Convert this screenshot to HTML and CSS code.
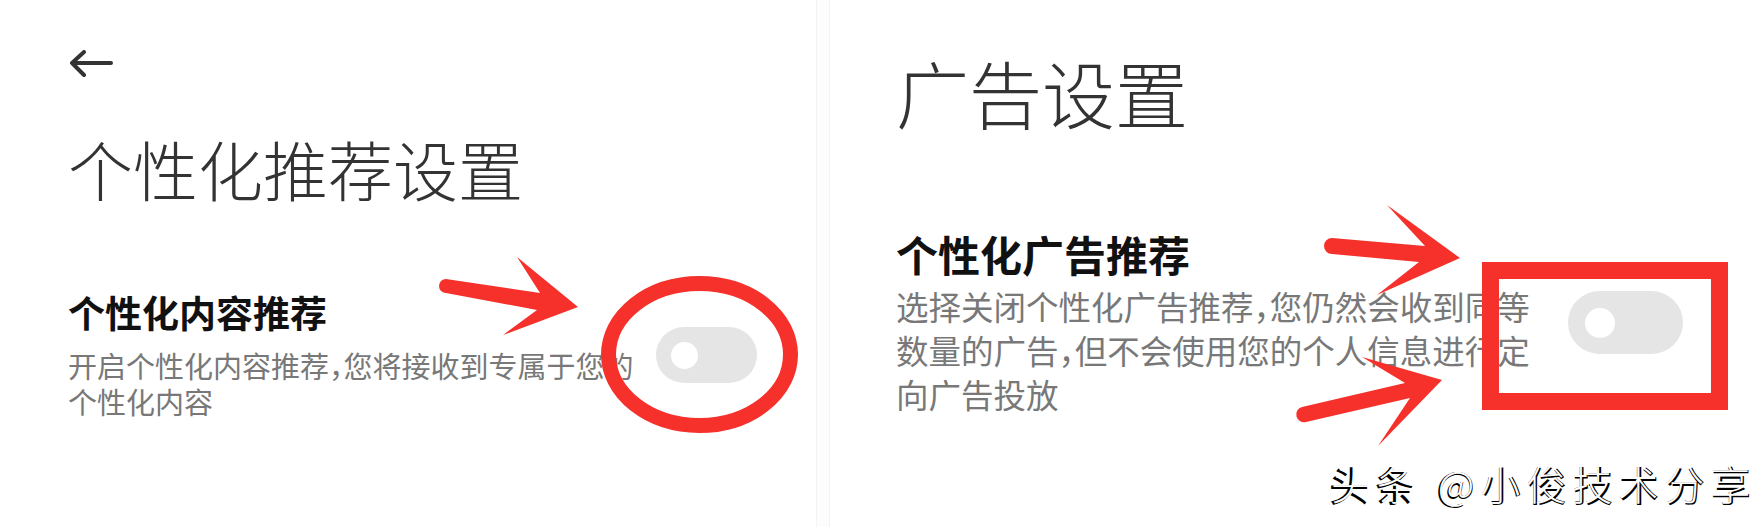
FILE: index.html
```
<!DOCTYPE html>
<html lang="zh-CN">
<head>
    <meta charset="UTF-8">
    <meta name="viewport" content="width=device-width, initial-scale=1.0">
    <title>个性化推荐设置 / 广告设置</title>
    <link rel="stylesheet" href="styles.css">
</head>
<body>

<div class="page">
    <section class="panel panel-left">
        <svg class="back" width="46" height="28" viewBox="0 0 46 28">
            <path d="M4 13 H43 M16 2 L4 13 L16 25" fill="none" stroke="#333" stroke-width="4" stroke-linecap="round" stroke-linejoin="round"/>
        </svg>
        <h1 class="title">个性化推荐设置</h1>
        <div class="row">
            <div class="text">
                <h2 class="item-title">个性化内容推荐</h2>
                <p class="item-desc">开启个性化内容推荐，您将接收到专属于您的<br>个性化内容</p>
            </div>
            <span class="switch"><span class="knob"></span></span>
        </div>
    </section>

    <section class="panel panel-right">
        <h1 class="title">广告设置</h1>
        <div class="row">
            <div class="text">
                <h2 class="item-title">个性化广告推荐</h2>
                <p class="item-desc">选择关闭个性化广告推荐，您仍然会收到同等<br>数量的广告，但不会使用您的个人信息进行定<br>向广告投放</p>
            </div>
            <span class="switch"><span class="knob"></span></span>
        </div>
        <div class="watermark" data-text="头条 @小俊技术分享">头条 @小俊技术分享</div>
    </section>

    <!-- red marks drawn over the screenshots -->
    <svg class="marks" width="1761" height="527" viewBox="0 0 1761 527">
        <path d="M446 279 L540 293 L517 257 L578 307 L503 335 L537 310 L446 293 A7 7 0 0 1 446 279 Z" fill="#f6302b"/>
        <ellipse cx="699.5" cy="354.5" rx="91" ry="71" fill="none" stroke="#f6302b" stroke-width="15"/>

        <path d="M1332 238 L1425 246 L1387 205 L1460 258 L1377 295 L1419 262 L1332 254 A8 8 0 0 1 1332 238 Z" fill="#f6302b"/>
        <path d="M1302 407 L1405 383 L1362 357 L1442 380 L1378 446 L1410 398 L1306 422 A7.7 7.7 0 0 1 1302 407 Z" fill="#f6302b"/>
        <rect x="1490.5" y="270.5" width="229" height="131" fill="none" stroke="#f6302b" stroke-width="17"/>
    </svg>
</div>

</body>
</html>
```

FILE: styles.css
```
body {
    margin: 0;
    background-color: #fdfdfd;
    font-family: "Noto Sans CJK SC", "Noto Sans", sans-serif;
}
.page {
    position: relative;
    display: flex;
    gap: 12px;
    width: 1761px;
    height: 527px;
    overflow: hidden;
}
.panel {
    position: relative;
    box-sizing: border-box;
    height: 527px;
    background-color: #fff;
}
.panel-left {
    width: 817px;
    padding: 50px 59px 0 68px;
    border-right: 1px solid #f3f3f3;
}
.panel-right {
    flex: 1;
    padding: 55px 78px 0 66px;
    border-left: 1px solid #f3f3f3;
}
.back {
    display: block;
}
.title {
    margin: 0;
    font-weight: 300;
    color: #333;
}
.panel-left .title {
    margin-top: 58px;
    font-size: 65px;
    line-height: 65px;
}
.panel-right .title {
    font-size: 73px;
    line-height: 73px;
}
.row {
    display: flex;
    align-items: flex-start;
}
.text {
    flex: 1;
    white-space: nowrap;
}
.item-title {
    margin: 0;
    font-weight: bold;
    color: #111;
}
.item-desc {
    margin: 0;
    color: #787878;
    font-feature-settings: "halt";
}
.panel-left .row {
    margin-top: 84px;
}
.panel-left .item-title {
    font-size: 37px;
    line-height: 54px;
}
.panel-left .item-desc {
    margin-top: 8px;
    font-size: 29px;
    line-height: 36px;
}
.panel-right .row {
    margin-top: 96px;
}
.panel-right .item-title {
    font-size: 42px;
    line-height: 60px;
}
.panel-right .item-desc {
    margin-top: 0;
    font-size: 32.5px;
    line-height: 44px;
}
.switch {
    display: flex;
    align-items: center;
    background-color: #e5e5e5;
    flex-shrink: 0;
}
.knob {
    display: block;
    border-radius: 50%;
    background-color: #fff;
}
.panel-left .switch {
    width: 101px;
    height: 56px;
    margin-top: 42px;
    border-radius: 28px;
}
.panel-left .knob {
    width: 27px;
    height: 27px;
    margin-left: 15px;
}
.panel-right .switch {
    width: 115px;
    height: 63px;
    margin-top: 67px;
    border-radius: 32px;
}
.panel-right .knob {
    width: 30px;
    height: 30px;
    margin-left: 17px;
}
.watermark {
    position: absolute;
    left: 499px;
    top: 464px;
    font-size: 40px;
    line-height: 40px;
    letter-spacing: 6px;
    white-space: nowrap;
    font-weight: 500;
    color: #000;
}
.watermark::after {
    content: attr(data-text);
    position: absolute;
    left: 2px;
    top: -1px;
    font-weight: 300;
    color: #fff;
}
.marks {
    position: absolute;
    left: 0;
    top: 0;
    pointer-events: none;
}
```
